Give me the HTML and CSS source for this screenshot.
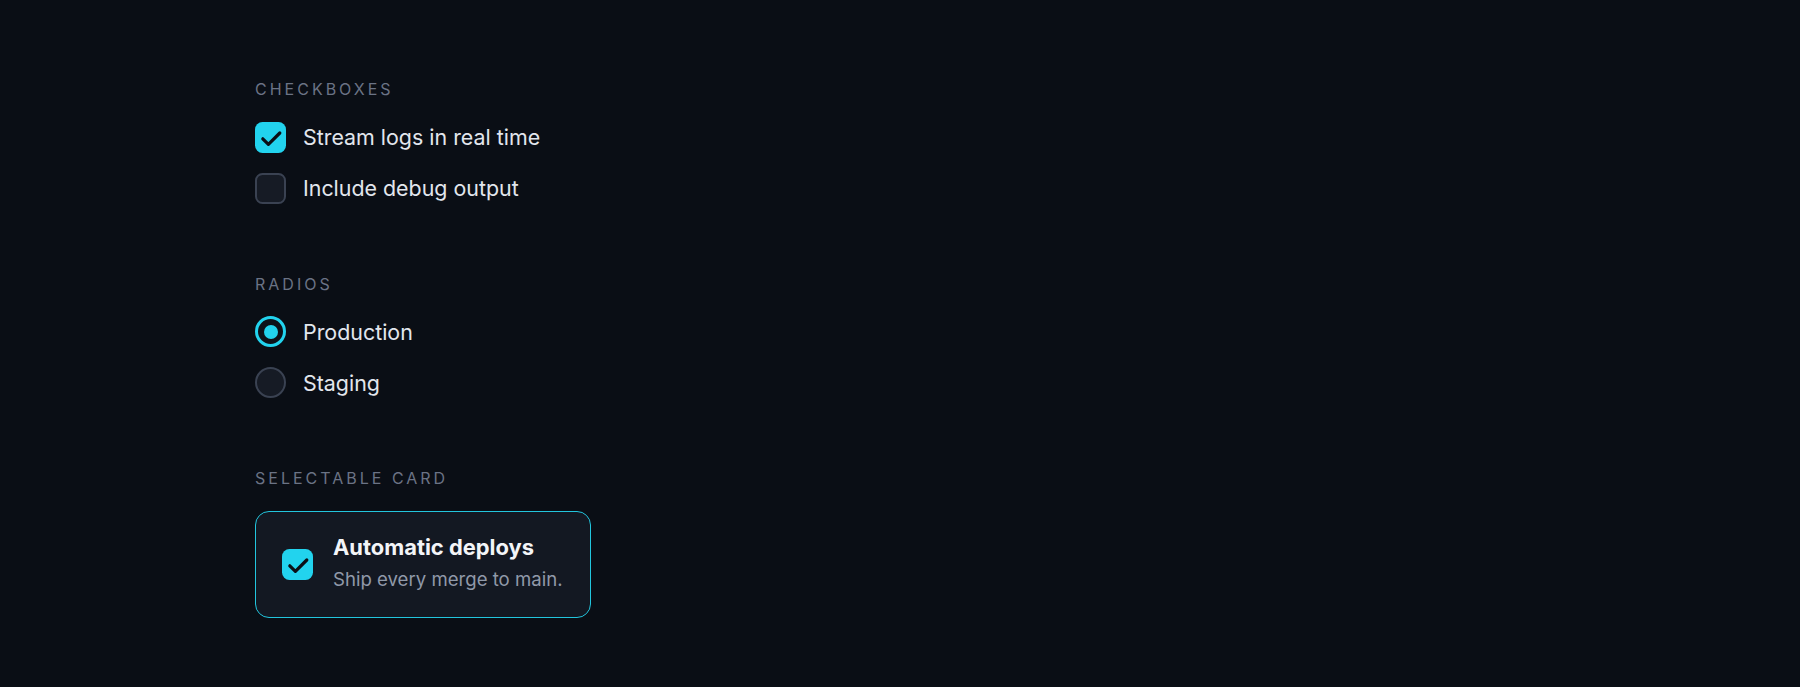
FILE: index.html
```html
<!DOCTYPE html>
<html lang="en">
<head>
<meta charset="utf-8">
<title>Controls</title>
<link rel="stylesheet" href="styles.css">
</head>
<body>
<main class="page">
  <section class="group">
    <div class="label">Checkboxes</div>
    <div class="rows">
      <label class="row">
        <span class="box box-on">
          <svg viewBox="0 0 31 31" width="31" height="31"><polyline points="7.8,16.8 13.4,22.4 24.8,11" fill="none" stroke="#0b0f16" stroke-width="3.2" stroke-linecap="round" stroke-linejoin="round"/></svg>
        </span>
        <span class="text">Stream logs in real time</span>
      </label>
      <label class="row">
        <span class="box box-off"></span>
        <span class="text">Include debug output</span>
      </label>
    </div>
  </section>

  <section class="group">
    <div class="label">Radios</div>
    <div class="rows">
      <label class="row">
        <span class="radio radio-on"><span class="dot"></span></span>
        <span class="text">Production</span>
      </label>
      <label class="row">
        <span class="radio radio-off"></span>
        <span class="text">Staging</span>
      </label>
    </div>
  </section>

  <section class="group last">
    <div class="label">Selectable card</div>
    <div class="card">
      <span class="box box-on">
        <svg viewBox="0 0 31 31" width="31" height="31"><polyline points="7.8,16.8 13.4,22.4 24.8,11" fill="none" stroke="#0b0f16" stroke-width="3.2" stroke-linecap="round" stroke-linejoin="round"/></svg>
      </span>
      <div class="card-text">
        <div class="card-title">Automatic deploys</div>
        <div class="card-sub">Ship every merge to main.</div>
      </div>
    </div>
  </section>
</main>
</body>
</html>
```

FILE: styles.css
```css
html, body {
  margin: 0;
  padding: 0;
  background: #0a0e15;
  height: 100%;
}

body {
  font-family: Inter, "Noto Sans", "Liberation Sans", sans-serif;
  color: #e2e6ed;
}

.page {
  padding: 79px 0 0 255px;
}

.group {
  display: flex;
  flex-direction: column;
  align-items: flex-start;
  margin-bottom: 70px;
}

.label {
  font-size: 16px;
  line-height: 20px;
  letter-spacing: 3px;
  text-transform: uppercase;
  color: #6b7385;
  margin-bottom: 22.7px;
}

.rows {
  display: flex;
  flex-direction: column;
  gap: 20px;
}

.row {
  display: flex;
  align-items: center;
  gap: 17px;
  height: 31px;
}

.text {
  font-size: 21.4px;
  line-height: 28px;
}

.box {
  width: 31px;
  height: 31px;
  box-sizing: border-box;
  border-radius: 7.5px;
  flex: none;
  display: block;
}

.box svg {
  display: block;
}

.box-on {
  background: #22d3ee;
}

.box-off {
  background: #161b25;
  border: 2px solid #3a4252;
}

.radio {
  width: 31px;
  height: 31px;
  box-sizing: border-box;
  border-radius: 50%;
  flex: none;
  display: flex;
  align-items: center;
  justify-content: center;
}

.radio-on {
  border: 3.5px solid #22d3ee;
  background: #0d121a;
}

.radio-on .dot {
  width: 14px;
  height: 14px;
  border-radius: 50%;
  background: #22d3ee;
}

.radio-off {
  border: 2px solid #3a4252;
  background: #161b25;
}

.card {
  display: flex;
  align-items: center;
  gap: 20.5px;
  box-sizing: border-box;
  height: 107px;
  padding: 0 27px 0 25.5px;
  border: 1.5px solid #22c5dd;
  border-radius: 14px;
  background: #131822;
}

.card-text {
  display: flex;
  flex-direction: column;
  gap: 5px;
  padding-bottom: 3.5px;
}

.card-title {
  font-size: 21.9px;
  line-height: 28px;
  font-weight: 700;
  color: #f3f5f8;
}

.card-sub {
  font-size: 18.6px;
  line-height: 26px;
  color: #9099a9;
}
```
